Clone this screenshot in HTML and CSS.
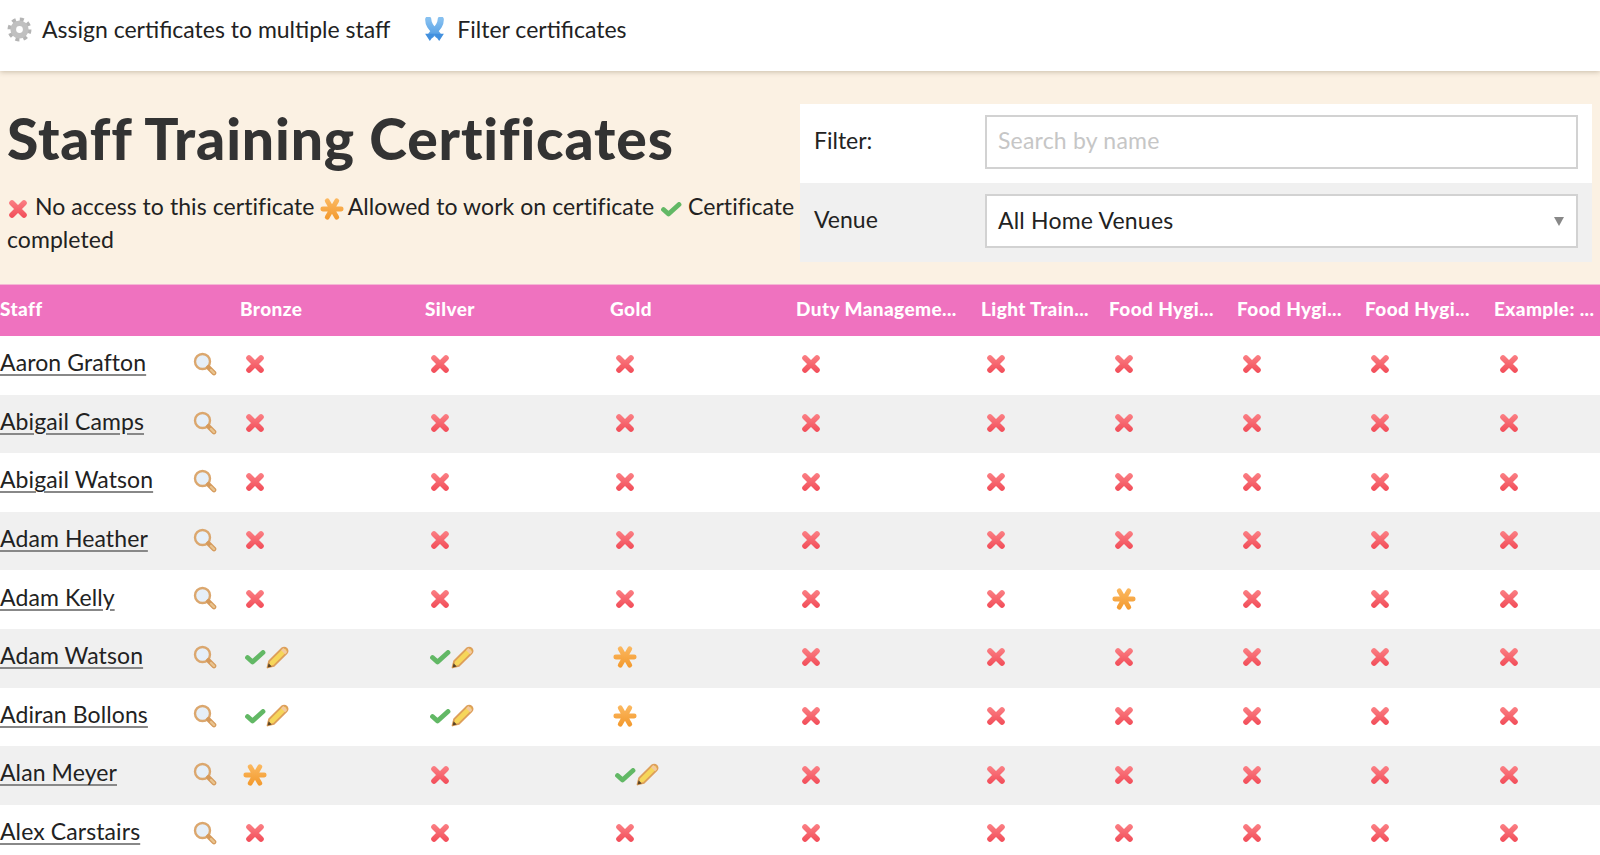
FILE: index.html
```html
<!DOCTYPE html>
<html lang="en">
<head>
<meta charset="utf-8">
<title>Staff Training Certificates</title>
<link rel="stylesheet" href="styles.css">
</head>
<body>
<svg class="defs" width="0" height="0" aria-hidden="true">
  <defs>
    <linearGradient id="gx" gradientUnits="userSpaceOnUse" x1="0" y1="3" x2="0" y2="21"><stop offset="0" stop-color="#fb8085"/><stop offset="1" stop-color="#f24c58"/></linearGradient>
    <linearGradient id="gs" gradientUnits="userSpaceOnUse" x1="0" y1="2" x2="0" y2="22"><stop offset="0" stop-color="#fbb860"/><stop offset="1" stop-color="#f39a2e"/></linearGradient>
    <linearGradient id="gb" gradientUnits="userSpaceOnUse" x1="0" y1="2" x2="0" y2="22"><stop offset="0" stop-color="#86c0f0"/><stop offset="1" stop-color="#4a98e2"/></linearGradient>
    <symbol id="x" viewBox="0 0 24 24"><path d="M6 6 18 18M18 6 6 18" stroke="url(#gx)" stroke-width="5.600" stroke-linecap="round" fill="none"/></symbol>
    <symbol id="s" viewBox="0 0 24 24"><path d="M2.800 12H21.200M7.200 3.800 16.800 20.200M16.800 3.800 7.200 20.200" stroke="url(#gs)" stroke-width="4.800" stroke-linecap="round" fill="none"/></symbol>
    <symbol id="c" viewBox="0 0 24 24"><path d="M4.500 12.500 9.500 17 20 7.500" stroke="#62b865" stroke-width="4.800" stroke-linecap="round" stroke-linejoin="round" fill="none"/></symbol>
    <symbol id="p" viewBox="0 0 22 22">
      <path d="M1.500 20.500 3 14.500 15 2.500Q17.500 .8 19.800 2.600 21.500 5 19.600 7L7.500 19Z" fill="#f6d65a" stroke="#dd9f5a" stroke-width="1.800" stroke-linejoin="round"/>
      <path d="M15.500 3 19.300 6.800" stroke="#f3c9a0" stroke-width="2.800"/>
      <path d="M1.500 20.500 2.500 16.500 5.500 19.500Z" fill="#5a4326"/>
    </symbol>
    <symbol id="m" viewBox="0 0 24 24">
      <circle cx="9.500" cy="9.500" r="7.500" fill="#e6eff8" stroke="#dba76e" stroke-width="2.400"/>
      <path d="M15.500 15.500 21 21" stroke="#d59a5c" stroke-width="4.600" stroke-linecap="round"/>
      <path d="M18 18 21 21" stroke="#e9c48f" stroke-width="2.400" stroke-linecap="round"/>
    </symbol>
    <symbol id="g" viewBox="0 0 24 24">
      <circle cx="12" cy="12" r="9.500" fill="none" stroke="#b4b4b4" stroke-width="4" stroke-dasharray="3.730 3.730"/>
      <circle cx="12" cy="12" r="6" fill="none" stroke="#c0c0c0" stroke-width="5.500"/>
    </symbol>
    <symbol id="f" viewBox="0 0 24 24">
      <path d="M6 2.500C6 9 11 12 15 17M18 2.500C18 9 13 12 9 17" stroke="url(#gb)" stroke-width="6" stroke-linecap="round" fill="none"/>
      <path d="M11.500 16H21L16.500 23ZM3 16H12.500L7.500 23Z" fill="#4290de"/>
    </symbol>
  </defs>
</svg>

<nav class="toolbar">
  <a class="tool"><svg class="ico-tool"><use href="#g"/></svg><span>Assign certificates to multiple staff</span></a>
  <a class="tool"><svg class="ico-tool"><use href="#f"/></svg><span>Filter certificates</span></a>
</nav>

<section class="hero">
  <div class="intro">
    <h1>Staff Training Certificates</h1>
    <p class="legend"><svg class="ico"><use href="#x"/></svg> <span>No access to this certificate</span> <svg class="ico"><use href="#s"/></svg> <span>Allowed to work on certificate</span> <svg class="ico"><use href="#c"/></svg> <span>Certificate</span> <span>completed</span></p>
  </div>
  <form class="filters">
    <div class="filter-row">
      <label class="filter-label" for="q">Filter:</label>
      <input class="field" id="q" type="text" placeholder="Search by name">
    </div>
    <div class="filter-row alt">
      <span class="filter-label">Venue</span>
      <div class="field select">All Home Venues<span class="caret"></span></div>
    </div>
  </form>
</section>

<table class="grid">
  <colgroup>
    <col class="c-staff"><col class="c-wide"><col class="c-wide"><col class="c-duty"><col class="c-wide"><col class="c-narrow"><col class="c-narrow"><col class="c-narrow"><col class="c-food"><col class="c-last">
  </colgroup>
  <thead>
    <tr><th>Staff</th><th>Bronze</th><th>Silver</th><th>Gold</th><th>Duty Manageme...</th><th>Light Train...</th><th>Food Hygi...</th><th>Food Hygi...</th><th>Food Hygi...</th><th>Example: ...</th></tr>
  </thead>
  <tbody>
    <tr><td class="who"><a>Aaron Grafton</a><svg class="ico-m"><use href="#m"/></svg></td><td><svg class="ico"><use href="#x"/></svg></td><td><svg class="ico"><use href="#x"/></svg></td><td><svg class="ico"><use href="#x"/></svg></td><td><svg class="ico"><use href="#x"/></svg></td><td><svg class="ico"><use href="#x"/></svg></td><td><svg class="ico"><use href="#x"/></svg></td><td><svg class="ico"><use href="#x"/></svg></td><td><svg class="ico"><use href="#x"/></svg></td><td><svg class="ico"><use href="#x"/></svg></td></tr>
    <tr><td class="who"><a>Abigail Camps</a><svg class="ico-m"><use href="#m"/></svg></td><td><svg class="ico"><use href="#x"/></svg></td><td><svg class="ico"><use href="#x"/></svg></td><td><svg class="ico"><use href="#x"/></svg></td><td><svg class="ico"><use href="#x"/></svg></td><td><svg class="ico"><use href="#x"/></svg></td><td><svg class="ico"><use href="#x"/></svg></td><td><svg class="ico"><use href="#x"/></svg></td><td><svg class="ico"><use href="#x"/></svg></td><td><svg class="ico"><use href="#x"/></svg></td></tr>
    <tr><td class="who"><a>Abigail Watson</a><svg class="ico-m"><use href="#m"/></svg></td><td><svg class="ico"><use href="#x"/></svg></td><td><svg class="ico"><use href="#x"/></svg></td><td><svg class="ico"><use href="#x"/></svg></td><td><svg class="ico"><use href="#x"/></svg></td><td><svg class="ico"><use href="#x"/></svg></td><td><svg class="ico"><use href="#x"/></svg></td><td><svg class="ico"><use href="#x"/></svg></td><td><svg class="ico"><use href="#x"/></svg></td><td><svg class="ico"><use href="#x"/></svg></td></tr>
    <tr><td class="who"><a>Adam Heather</a><svg class="ico-m"><use href="#m"/></svg></td><td><svg class="ico"><use href="#x"/></svg></td><td><svg class="ico"><use href="#x"/></svg></td><td><svg class="ico"><use href="#x"/></svg></td><td><svg class="ico"><use href="#x"/></svg></td><td><svg class="ico"><use href="#x"/></svg></td><td><svg class="ico"><use href="#x"/></svg></td><td><svg class="ico"><use href="#x"/></svg></td><td><svg class="ico"><use href="#x"/></svg></td><td><svg class="ico"><use href="#x"/></svg></td></tr>
    <tr><td class="who"><a>Adam Kelly</a><svg class="ico-m"><use href="#m"/></svg></td><td><svg class="ico"><use href="#x"/></svg></td><td><svg class="ico"><use href="#x"/></svg></td><td><svg class="ico"><use href="#x"/></svg></td><td><svg class="ico"><use href="#x"/></svg></td><td><svg class="ico"><use href="#x"/></svg></td><td><svg class="ico"><use href="#s"/></svg></td><td><svg class="ico"><use href="#x"/></svg></td><td><svg class="ico"><use href="#x"/></svg></td><td><svg class="ico"><use href="#x"/></svg></td></tr>
    <tr><td class="who"><a>Adam Watson</a><svg class="ico-m"><use href="#m"/></svg></td><td><svg class="ico"><use href="#c"/></svg><svg class="ico-p"><use href="#p"/></svg></td><td><svg class="ico"><use href="#c"/></svg><svg class="ico-p"><use href="#p"/></svg></td><td><svg class="ico"><use href="#s"/></svg></td><td><svg class="ico"><use href="#x"/></svg></td><td><svg class="ico"><use href="#x"/></svg></td><td><svg class="ico"><use href="#x"/></svg></td><td><svg class="ico"><use href="#x"/></svg></td><td><svg class="ico"><use href="#x"/></svg></td><td><svg class="ico"><use href="#x"/></svg></td></tr>
    <tr><td class="who"><a>Adiran Bollons</a><svg class="ico-m"><use href="#m"/></svg></td><td><svg class="ico"><use href="#c"/></svg><svg class="ico-p"><use href="#p"/></svg></td><td><svg class="ico"><use href="#c"/></svg><svg class="ico-p"><use href="#p"/></svg></td><td><svg class="ico"><use href="#s"/></svg></td><td><svg class="ico"><use href="#x"/></svg></td><td><svg class="ico"><use href="#x"/></svg></td><td><svg class="ico"><use href="#x"/></svg></td><td><svg class="ico"><use href="#x"/></svg></td><td><svg class="ico"><use href="#x"/></svg></td><td><svg class="ico"><use href="#x"/></svg></td></tr>
    <tr><td class="who"><a>Alan Meyer</a><svg class="ico-m"><use href="#m"/></svg></td><td><svg class="ico"><use href="#s"/></svg></td><td><svg class="ico"><use href="#x"/></svg></td><td><svg class="ico"><use href="#c"/></svg><svg class="ico-p"><use href="#p"/></svg></td><td><svg class="ico"><use href="#x"/></svg></td><td><svg class="ico"><use href="#x"/></svg></td><td><svg class="ico"><use href="#x"/></svg></td><td><svg class="ico"><use href="#x"/></svg></td><td><svg class="ico"><use href="#x"/></svg></td><td><svg class="ico"><use href="#x"/></svg></td></tr>
    <tr><td class="who"><a>Alex Carstairs</a><svg class="ico-m"><use href="#m"/></svg></td><td><svg class="ico"><use href="#x"/></svg></td><td><svg class="ico"><use href="#x"/></svg></td><td><svg class="ico"><use href="#x"/></svg></td><td><svg class="ico"><use href="#x"/></svg></td><td><svg class="ico"><use href="#x"/></svg></td><td><svg class="ico"><use href="#x"/></svg></td><td><svg class="ico"><use href="#x"/></svg></td><td><svg class="ico"><use href="#x"/></svg></td><td><svg class="ico"><use href="#x"/></svg></td></tr>
  </tbody>
</table>
</body>
</html>
```

FILE: styles.css
```css
html, body {
  margin: 0;
  height: 855px;
  overflow: hidden;
  background: #fff;
  color: #222;
  font-family: "Lato", "Open Sans", sans-serif;
  font-size: 23px;
}
.defs { position: absolute; }
svg { filter: blur(.35px); }
.toolbar {
  height: 71px;
  display: flex;
  align-items: center;
  gap: 32px;
  padding: 0 0 13px 7px;
  box-sizing: border-box;
  background: #fff;
  box-shadow: 0 1px 5px rgba(90, 70, 40, .3);
  position: relative;
}
.tool { display: flex; align-items: center; gap: 10px; }
.ico-tool { width: 25px; height: 25px; }
.hero {
  height: 214px;
  background: #fbf1e3;
  display: flex;
  padding: 33px 8px 0 7px;
  box-sizing: border-box;
  border-bottom: 1px solid #f4b8d4;
}
.intro { width: 793px; flex: none; }
h1 {
  margin: 0;
  font-size: 57px;
  line-height: 68px;
  font-weight: 900;
  letter-spacing: .85px;
  color: #333;
}
.legend {
  margin: 18px 0 0;
  line-height: 33px;
  color: #222;
  letter-spacing: .06px;
}
.legend .ico { vertical-align: -6px; margin: 0 -1px 0 -1px; }
.filters { flex: 1; }
.filter-row {
  height: 79px;
  display: flex;
  align-items: center;
  background: #fff;
  padding: 0 14px 4px 14px;
  box-sizing: border-box;
}
.filter-row.alt { background: #f0f0f0; padding-bottom: 3px; }
.filter-label { width: 171px; flex: none; padding-bottom: 4px; }
.field {
  flex: 1;
  height: 54px;
  box-sizing: border-box;
  border: 2px solid #d2d2d2;
  background: #fff;
  padding: 0 11px 3px 11px;
  font: inherit;
  letter-spacing: .2px;
  color: #222;
  display: flex;
  align-items: center;
  position: relative;
}
.field::placeholder { color: #c6c6c6; }
.caret {
  position: absolute;
  right: 12px;
  top: 21px;
  border: 5.500px solid transparent;
  border-top: 9px solid #888;
  border-bottom: 0;
}
.grid {
  width: 1600px;
  table-layout: fixed;
  border-collapse: collapse;
}
.c-staff { width: 240px; }
.c-wide { width: 185px; }
.c-duty { width: 186px; }
.c-narrow { width: 128px; }
.c-food { width: 129px; }
.c-last { width: 106px; }
.grid th {
  height: 51px;
  padding: 0 0 5px 0;
  box-sizing: border-box;
  background: #ef72bf;
  color: #fff;
  text-align: left;
  font-size: 19px;
  font-weight: 900;
  letter-spacing: .4px;
  white-space: nowrap;
  overflow: hidden;
}
.grid td {
  height: 58.600px;
  box-sizing: border-box;
  padding: 0 0 7px 3px;
  vertical-align: middle;
  white-space: nowrap;
}
.grid tbody tr:nth-child(even) td { background: #f0f0f0; }
.grid td.who { padding: 0 0 6px 0; position: relative; }
.who a {
  text-decoration: underline;
  text-decoration-color: #888;
  text-underline-offset: 3px;
  letter-spacing: .1px;
}
.ico { width: 24px; height: 24px; vertical-align: middle; }
.ico-p { width: 23px; height: 23px; margin-left: -1px; vertical-align: middle; }
.ico-m {
  width: 24px;
  height: 24px;
  position: absolute;
  left: 193px;
  top: 16px;
}
```
